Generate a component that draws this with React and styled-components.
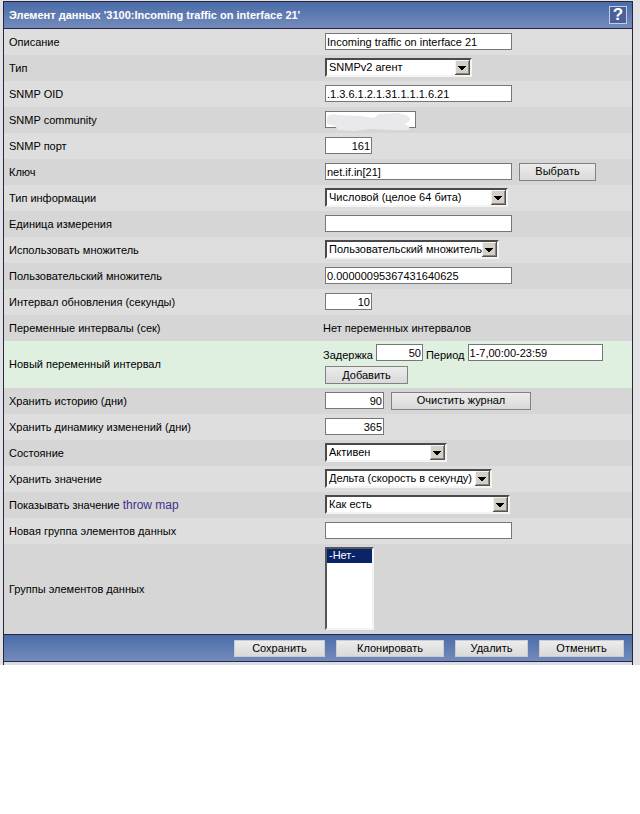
import React from "react"
import styled, { createGlobalStyle } from "styled-components"

const GlobalStyle = createGlobalStyle`
    body {
        margin: 0;
        background: #fff;
    }
    * {
        box-sizing: border-box;
    }
    body, input, select, button {
        font-family: "Liberation Sans", Arial, sans-serif;
        font-size: 11px;
        line-height: 13px;
        color: #000;
    }
`

const Page = styled.main`
    padding: 1px 7px 0 3px;
    background: #e2e2e4;
`

const Panel = styled.form`
    border: 1px solid #26263f;
    border-bottom: none;
    padding-bottom: 3px;
    background: #dcdce4;
`

const Header = styled.header`
    display: flex;
    align-items: center;
    justify-content: space-between;
    height: 27px;
    padding: 0 5px;
    border-bottom: 1px solid #26264a;
    background: linear-gradient(#4a6ca9, #748bbb);
`

const Title = styled.h1`
    margin: 0;
    font-size: 11px;
    color: #fff;
`

const HelpButton = styled.button`
    display: flex;
    align-items: center;
    justify-content: center;
    width: 18px;
    height: 18px;
    padding: 0;
    border: 1px solid #c3cde4;
    background: #4b5f98;
    font-size: 17px;
    line-height: 16px;
    font-weight: bold;
    color: #fff;
`

const Row = styled.div`
    display: grid;
    grid-template-columns: 314px 1fr;
    align-items: center;
    min-height: ${props => props.$height || 26}px;
    padding: 0 5px 1px;
    background: ${props => props.$new ? "#dff0e0" : "#dedede"};

    &:nth-of-type(even) {
        background: ${props => props.$new ? "#dff0e0" : "#d6d6d6"};
    }
`

const Label = styled.label`
    display: inline-block;
    padding-top: 1px;
`

const MapLink = styled.a`
    font-size: 12px;
    color: #41318f;
    text-decoration: none;
`

const Controls = styled.div`
    display: flex;
    align-items: center;
    gap: 7px;
    padding-left: ${props => props.$text ? 0 : 2}px;
`

const Stack = styled.div`
    display: grid;
    gap: 4px;
`

const Inline = styled.div`
    display: flex;
    gap: 3px;
`

const InlineLabel = styled.label`
    padding-top: 5px;
`

const TextInput = styled.input`
    width: ${props => props.$width || 187}px;
    height: 17px;
    padding: 0 1px;
    border: 1px solid #777;
    border-radius: 0;
    background: #fff;
    text-align: ${props => props.$number ? "right" : "left"};
`

const Button = styled.button`
    width: ${props => props.$width}px;
    height: ${props => props.$footer ? 17 : 18}px;
    padding: 0;
    border: 1px solid ${props => props.$footer ? "#c9ccd0" : "#828282"};
    border-radius: 0;
    background: linear-gradient(#ececec, #d9d9d9);
`

const SelectBox = styled.div`
    position: relative;
    width: ${props => props.$width}px;
    height: 19px;
`

const Select = styled.select`
    appearance: none;
    width: 100%;
    height: 19px;
    padding: 0 14px 0 2px;
    border: 2px solid;
    border-color: #4a4a4e #f4f4f4 #f4f4f4 #4a4a4e;
    border-radius: 0;
    background: #fff;
`

const Arrow = styled.svg`
    position: absolute;
    top: 2px;
    right: 2px;
    pointer-events: none;
`

const ListBox = styled.select`
    width: 49px;
    height: 83px;
    padding: 0;
    border: 2px solid;
    border-color: #55565a #f4f4f4 #f4f4f4 #55565a;
    border-radius: 0;
    background: #fff;
    overflow: hidden;

    option {
        min-height: 14px;
        padding: 0 2px;
        line-height: 14px;
    }

    option:checked {
        background: linear-gradient(#0a246a, #0a246a);
        color: #fff;
    }
`

const Masked = styled.div`
    position: relative;
    display: flex;
`

const Scribble = styled.svg`
    position: absolute;
    top: 1px;
    left: 1px;
    pointer-events: none;
`

const Footer = styled.footer`
    display: flex;
    align-items: center;
    justify-content: flex-end;
    gap: 11px;
    height: 28px;
    padding-right: 8px;
    border-top: 1px solid #26264a;
    border-bottom: 1px solid #26264a;
    background: linear-gradient(#4a6ca9, #748bbb);
`

const Field = ({ id, label, value = "", width, number, children }) => {
    return(
        <Row>
            <Label htmlFor={id}>{label}</Label>
            <Controls>
                <TextInput id={id} defaultValue={value} $width={width} $number={number} />
                {children}
            </Controls>
        </Row>
    )
}

const SelectField = ({ id, label, value, width, link }) => {
    return(
        <Row>
            <div>
                <Label htmlFor={id}>{label}</Label>
                {link && <> <MapLink href="#map">{link}</MapLink></>}
            </div>
            <Controls>
                <SelectBox $width={width}>
                    <Select id={id}>
                        <option>{value}</option>
                    </Select>
                    <Arrow width="15" height="15" viewBox="0 0 15 15" shapeRendering="crispEdges">
                        <rect width="15" height="15" fill="#55534f" />
                        <rect width="14" height="14" fill="#f5f3ee" />
                        <rect x="1" y="1" width="13" height="13" fill="#8a8781" />
                        <rect x="1" y="1" width="12" height="12" fill="#d4d0c8" />
                        <path d="M3 6h8v1h-1v1h-1v1h-1v1h-2v-1h-1v-1h-1v-1h-1z" fill="#000" />
                    </Arrow>
                </SelectBox>
            </Controls>
        </Row>
    )
}

const App = () => {
    return(
        <>
            <GlobalStyle />
            <Page>
                <Panel onSubmit={e => e.preventDefault()}>
                    <Header>
                        <Title>Элемент данных '3100:Incoming traffic on interface 21'</Title>
                        <HelpButton type="button">?</HelpButton>
                    </Header>

                    <Field id="description" label="Описание" value="Incoming traffic on interface 21" />
                    <SelectField id="type" label="Тип" value="SNMPv2 агент" width={147} />
                    <Field id="oid" label="SNMP OID" value=".1.3.6.1.2.1.31.1.1.1.6.21" />
                    <Row>
                        <Label htmlFor="community">SNMP community</Label>
                        <Controls>
                            <Masked>
                                <TextInput id="community" $width={91} />
                                {/* the community string is painted over */}
                                <Scribble width="90" height="20" viewBox="0 0 90 20">
                                    <path d="M1 5Q4 1 13 3L35 4L48 6L53 2L72 1L80 3Q86 6 83 9L79 12Q86 14 82 18L64 18L45 17L28 19L12 18L9 14L1 12Z" fill="#e9e9ec" />
                                </Scribble>
                            </Masked>
                        </Controls>
                    </Row>
                    <Field id="port" label="SNMP порт" value="161" width={47} number />
                    <Field id="key" label="Ключ" value="net.if.in[21]">
                        <Button type="button" $width={77}>Выбрать</Button>
                    </Field>
                    <SelectField id="valueType" label="Тип информации" value="Числовой (целое 64 бита)" width={183} />
                    <Field id="units" label="Единица измерения" />
                    <SelectField id="multiplier" label="Использовать множитель" value="Пользовательский множитель" width={174} />
                    <Field id="formula" label="Пользовательский множитель" value="0.00000095367431640625" />
                    <Field id="delay" label="Интервал обновления (секунды)" value="10" width={47} number />
                    <Row>
                        <Label as="span">Переменные интервалы (сек)</Label>
                        <Controls $text>
                            <Label as="span">Нет переменных интервалов</Label>
                        </Controls>
                    </Row>
                    <Row $new $height={47}>
                        <Label as="span">Новый переменный интервал</Label>
                        <Stack>
                            <Inline>
                                <InlineLabel htmlFor="newDelay">Задержка</InlineLabel>
                                <TextInput id="newDelay" defaultValue="50" $width={47} $number />
                                <InlineLabel htmlFor="newPeriod">Период</InlineLabel>
                                <TextInput id="newPeriod" defaultValue="1-7,00:00-23:59" $width={135} />
                            </Inline>
                            <Controls>
                                <Button type="button" $width={83}>Добавить</Button>
                            </Controls>
                        </Stack>
                    </Row>
                    <Field id="history" label="Хранить историю (дни)" value="90" width={59} number>
                        <Button type="button" $width={140}>Очистить журнал</Button>
                    </Field>
                    <Field id="trends" label="Хранить динамику изменений (дни)" value="365" width={59} number />
                    <SelectField id="status" label="Состояние" value="Активен" width={122} />
                    <SelectField id="delta" label="Хранить значение" value="Дельта (скорость в секунду)" width={167} />
                    <SelectField id="valueMap" label="Показывать значение" value="Как есть" width={185} link="throw map" />
                    <Field id="newGroup" label="Новая группа элементов данных" />
                    <Row $height={90}>
                        <Label htmlFor="groups">Группы элементов данных</Label>
                        <Controls>
                            <ListBox id="groups" multiple defaultValue={["none"]}>
                                <option value="none">-Нет-</option>
                            </ListBox>
                        </Controls>
                    </Row>

                    <Footer>
                        <Button $footer $width={91}>Сохранить</Button>
                        <Button type="button" $footer $width={108}>Клонировать</Button>
                        <Button type="button" $footer $width={73}>Удалить</Button>
                        <Button type="button" $footer $width={85}>Отменить</Button>
                    </Footer>
                </Panel>
            </Page>
        </>
    )
}

export default App
